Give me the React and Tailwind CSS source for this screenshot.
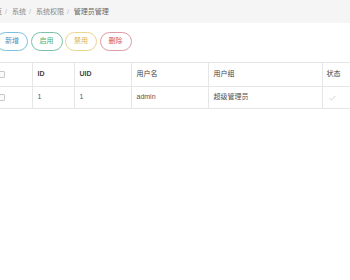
export default function App() {
  const crumbs = ["首页", "系统", "系统权限", "管理员管理"];
  const btns = [
    { t: "新增", c: "border-[#7cc0dd] text-[#3f96c9]" },
    { t: "启用", c: "border-[#79c2a8] text-[#4fae6a]" },
    { t: "禁用", c: "border-[#ead68f] text-[#d6b24c]" },
    { t: "删除", c: "border-[#dd9ba3] text-[#d9534f]" },
  ];
  return (
    <div className="w-[350px] h-[280px] overflow-hidden bg-white text-[7px] font-['Liberation_Sans','Noto_Sans_CJK_SC',sans-serif] text-[#555]">
      <div className="h-[23px] bg-[#f5f5f5] flex items-center">
        <div className="flex items-center -ml-[12px] pt-[1px]">
          {crumbs.map((c, i) => (
            <div key={c} className="flex items-center">
              {i > 0 && <span className="pl-[3px] pr-[5px] text-[#bbb]">/</span>}
              <span className={i === crumbs.length - 1 ? "text-[#666]" : "text-[#888]"}>{c}</span>
            </div>
          ))}
        </div>
      </div>
      <div className="flex gap-[2.5px] mt-[9px] -ml-[4px]">
        {btns.map((b) => (
          <div
            key={b.t}
            className={`h-[19px] w-[32px] rounded-full border bg-white flex items-center justify-center ${b.c}`}
          >
            {b.t}
          </div>
        ))}
      </div>
      <table className="mt-[11px] -ml-[10px] border-collapse table-fixed w-[400px]">
        <colgroup>
          <col className="w-[42px]" />
          <col className="w-[42px]" />
          <col className="w-[57px]" />
          <col className="w-[77px]" />
          <col className="w-[114px]" />
          <col />
        </colgroup>
        <thead>
          <tr className="h-[24px] border-t border-b border-[#e6e6e6]">
            <th className="pl-[8px] text-left border-r border-[#e6e6e6]">
              <div className="w-[7px] h-[7px] border border-[#c8c8c8] rounded-[1px] bg-[#fafafa]" />
            </th>
            <th className="pl-[5px] text-left font-bold text-[#444] border-r border-[#e6e6e6]">ID</th>
            <th className="pl-[5px] text-left font-bold text-[#444] border-r border-[#e6e6e6]">UID</th>
            <th className="pl-[5px] text-left font-normal text-[#444] border-r border-[#e6e6e6]">用户名</th>
            <th className="pl-[5px] text-left font-normal text-[#444] border-r border-[#e6e6e6]">用户组</th>
            <th className="pl-[4px] text-left font-normal text-[#444]">状态</th>
          </tr>
        </thead>
        <tbody>
          <tr className="h-[22px] border-b border-[#e6e6e6]">
            <td className="pl-[8px] border-r border-[#e6e6e6]">
              <div className="w-[7px] h-[7px] border border-[#c8c8c8] rounded-[1px] bg-[#fafafa]" />
            </td>
            <td className="pl-[5px] border-r border-[#e6e6e6]">1</td>
            <td className="pl-[5px] border-r border-[#e6e6e6]">1</td>
            <td className="pl-[5px] border-r border-[#e6e6e6]">admin</td>
            <td className="pl-[5px] border-r border-[#e6e6e6]">超级管理员</td>
            <td className="pl-[6px]">
              <svg width="7" height="6" viewBox="0 0 7 6" fill="none">
                <path d="M0.5 3.2 L2.5 5.2 L6.5 0.8" stroke="#c8c8c8" strokeWidth="0.8" />
              </svg>
            </td>
          </tr>
        </tbody>
      </table>
    </div>
  );
}
